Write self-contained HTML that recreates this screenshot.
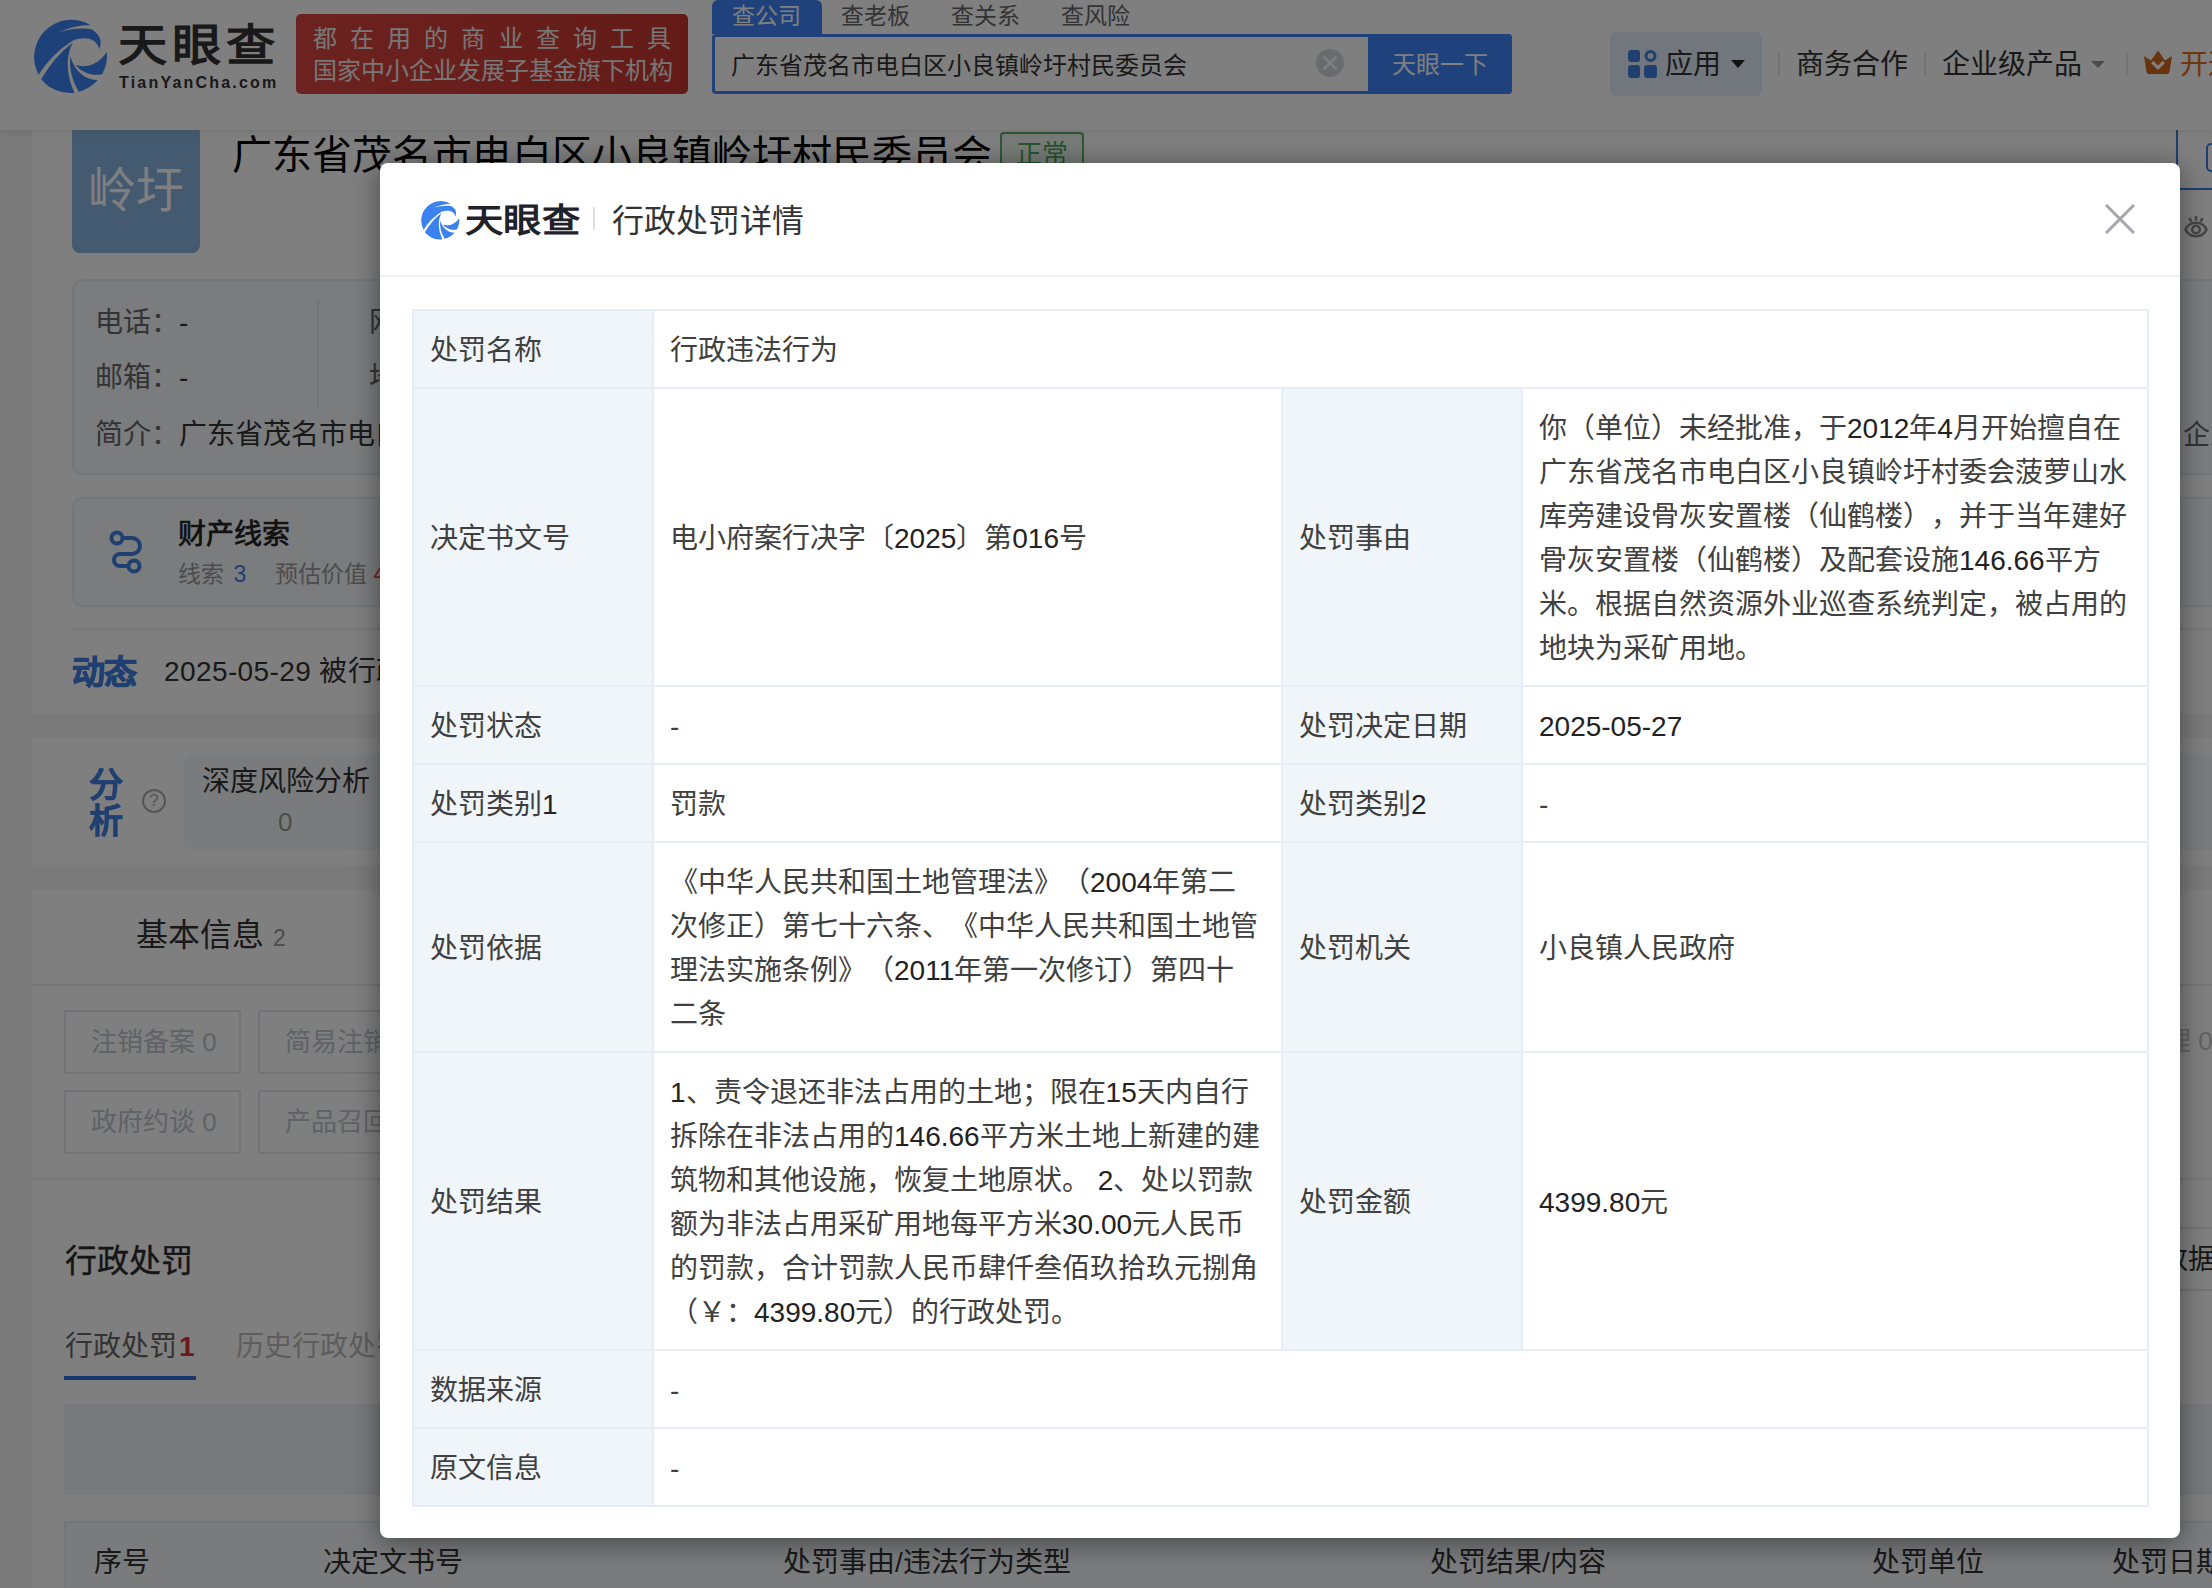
<!DOCTYPE html>
<html lang="zh-CN"><head><meta charset="utf-8">
<style>
*{box-sizing:border-box;margin:0;padding:0}
html,body{width:2212px;height:1588px;overflow:hidden}
body{font-family:"Liberation Sans",sans-serif;text-spacing-trim:space-all;background:#f4f4f4;position:relative;color:#333}
.a{position:absolute;white-space:nowrap}
#hdr{position:absolute;left:0;top:0;width:2212px;height:130px;background:#fff;box-shadow:0 2px 8px rgba(0,0,0,0.10);z-index:2}
.card{position:absolute;background:#fff}
#mask{position:absolute;left:0;top:0;width:2212px;height:1588px;background:rgba(0,0,0,0.5);z-index:10}
#modal{position:absolute;left:380px;top:163px;width:1800px;height:1375px;background:#fff;border-radius:8px;z-index:11;box-shadow:0 4px 28px rgba(0,0,0,0.45)}
.lbl{color:#333}
table.t{position:absolute;left:32px;top:146px;border-collapse:collapse;table-layout:fixed;width:1735px}
table.t td{border:2px solid #e6edf6;font-size:28px;line-height:44px;padding:18px 16px 14px 16px;vertical-align:middle;white-space:nowrap;color:#404040}
table.t td.l{background:#f0f5fa}
table.t i{font-style:normal;color:#222}
</style></head><body>

<!-- ============ PAGE ============ -->
<!-- company card -->
<div class="card" style="left:32px;top:100px;width:2400px;height:614px">
  <div class="a" style="left:40px;top:25px;width:128px;height:128px;background:#87b5e0;border-radius:8px;color:#fff;font-size:48px;line-height:132px;text-align:center">岭圩</div>
  <div class="a" style="left:200px;top:31px;font-size:40px;line-height:48px;color:#000">广东省茂名市电白区小良镇岭圩村民委员会</div>
  <div class="a" style="left:968px;top:32px;width:84px;height:44px;border:2px solid #5fae6d;background:#eef8f0;border-radius:4px;color:#4aaa5a;font-size:26px;line-height:40px;text-align:center">正常</div>
  <!-- info box -->
  <div class="a" style="left:40px;top:179px;width:2400px;height:196px;background:#f5f8fd;border:2px solid #e6edf7;border-radius:10px"></div>
  <div class="a" style="left:285px;top:200px;width:2px;height:111px;background:#e6eaf0"></div>
  <div class="a" style="left:63px;top:206px;font-size:28px;line-height:34px;color:#666">电话：<span style="color:#333">-</span></div>
  <div class="a" style="left:63px;top:261px;font-size:28px;line-height:34px;color:#666">邮箱：<span style="color:#333">-</span></div>
  <div class="a" style="left:63px;top:318px;font-size:28px;line-height:34px;color:#666">简介：<span style="color:#333">广东省茂名市电白区小良镇岭圩村民委员会</span></div>
  <div class="a" style="left:337px;top:206px;font-size:28px;line-height:34px;color:#666">网址：</div>
  <div class="a" style="left:337px;top:261px;font-size:28px;line-height:34px;color:#666">地址：</div>
  <!-- property box -->
  <div class="a" style="left:40px;top:397px;width:2400px;height:110px;background:#f5f8fd;border:2px solid #e6edf7;border-radius:10px"></div>
  <svg class="a" style="left:76px;top:430px" width="36" height="44" viewBox="0 0 36 44"><g fill="none" stroke="#3d7fe0" stroke-width="4"><circle cx="9" cy="8" r="5.5"/><circle cx="26" cy="36" r="5.5"/><path d="M14.5 8 H24 a8 8 0 0 1 0 16 H12 a6 6 0 0 0 0 12 H20.5"/></g></svg>
  <div class="a" style="left:146px;top:417px;font-size:28px;line-height:36px;color:#222;-webkit-text-stroke:0.7px #222">财产线索</div>
  <div class="a" style="left:146px;top:458px;font-size:23px;line-height:32px;color:#999">线索 <span style="color:#3d7fe0;margin-left:3px">3</span><span style="display:inline-block;width:29px"></span>预估价值 <span style="color:#e44">4</span></div>
  <!-- divider -->
  <div class="a" style="left:40px;top:528px;width:2400px;height:2px;background:#eceef2"></div>
  <div class="a" style="left:40px;top:553px;font-size:33px;line-height:40px;color:#3d7fe0;font-weight:bold;letter-spacing:-1px;-webkit-text-stroke:1px #3d7fe0">动态</div>
  <div class="a" style="left:132px;top:554px;font-size:28px;line-height:36px;color:#333;letter-spacing:0.4px">2025-05-29 被行政处罚</div>
</div>

<!-- analysis card -->
<div class="card" style="left:32px;top:738px;width:2400px;height:127px">
  <div class="a" style="left:57px;top:29px;font-size:34px;line-height:36px;color:#3d7fe0;font-weight:bold;-webkit-text-stroke:0.5px #3d7fe0;white-space:normal;width:36px">分析</div>
  <div class="a" style="left:110px;top:51px;width:24px;height:24px;border:2px solid #aaa;border-radius:50%;font-size:17px;line-height:20px;text-align:center;color:#aaa">?</div>
  <div class="a" style="left:152px;top:17px;width:2400px;height:95px;background:#f5f7fa;border-radius:8px"></div>
  <div class="a" style="left:170px;top:28px;font-size:28px;line-height:32px;color:#333">深度风险分析</div>
  <div class="a" style="left:246px;top:68px;font-size:26px;line-height:32px;color:#999">0</div>
</div>

<!-- basic info card -->
<div class="card" style="left:32px;top:889px;width:2400px;height:900px">
  <div class="a" style="left:104px;top:26px;font-size:32px;line-height:40px;color:#333">基本信息 <span style="font-size:23px;color:#999">2</span></div>
  <div class="a" style="left:0;top:95px;width:2400px;height:2px;background:#eceef2"></div>
  <div class="a" style="left:32px;top:121px;width:177px;height:64px;border:2px solid #e6e9ef;border-radius:2px;font-size:26px;line-height:60px;color:#bfc4cc;padding-left:25px">注销备案 0</div>
  <div class="a" style="left:226px;top:121px;width:177px;height:64px;border:2px solid #e6e9ef;border-radius:2px;font-size:26px;line-height:60px;color:#bfc4cc;padding-left:25px">简易注销 0</div>
  <div class="a" style="left:32px;top:201px;width:177px;height:64px;border:2px solid #e6e9ef;border-radius:2px;font-size:26px;line-height:60px;color:#bfc4cc;padding-left:25px">政府约谈 0</div>
  <div class="a" style="left:226px;top:201px;width:177px;height:64px;border:2px solid #e6e9ef;border-radius:2px;font-size:26px;line-height:60px;color:#bfc4cc;padding-left:25px">产品召回 0</div>
  <div class="a" style="left:0;top:289px;width:2400px;height:2px;background:#eceef2"></div>
  <div class="a" style="left:33px;top:352px;font-size:32px;line-height:40px;color:#2a2a2a;-webkit-text-stroke:0.4px #2a2a2a">行政处罚</div>
  <div class="a" style="left:33px;top:440px;font-size:28px;line-height:36px;color:#666">行政处罚<b style="color:#d33;margin-left:2px">1</b></div>
  <div class="a" style="left:204px;top:440px;font-size:28px;line-height:36px;color:#bbb">历史行政处罚</div>
  <div class="a" style="left:32px;top:487px;width:132px;height:4px;background:#2f6cd6"></div>
  <div class="a" style="left:32px;top:515px;width:2400px;height:91px;background:#f0f3f8"></div>
  <div class="a" style="left:32px;top:632px;width:2400px;height:200px;background:#f5f7fa;border:2px solid #e8ebf0"></div>
  <div class="a" style="left:62px;top:657px;font-size:28px;line-height:34px;color:#333">序号</div>
  <div class="a" style="left:291px;top:657px;font-size:28px;line-height:34px;color:#333">决定文书号</div>
  <div class="a" style="left:751px;top:657px;font-size:28px;line-height:34px;color:#333">处罚事由/违法行为类型</div>
  <div class="a" style="left:1398px;top:657px;font-size:28px;line-height:34px;color:#333">处罚结果/内容</div>
  <div class="a" style="left:1840px;top:657px;font-size:28px;line-height:34px;color:#333">处罚单位</div>
  <div class="a" style="left:2080px;top:657px;font-size:28px;line-height:34px;color:#333">处罚日期</div>
</div>

<!-- ============ HEADER ============ -->
<div id="hdr">
  <svg class="a" style="left:28px;top:14px" width="84" height="84" viewBox="0 0 1588 1588">
    <g fill="#3b82f0">
      <path d="M200 1150 Q450 750 850 500 C1050 420 1300 440 1345 665 C1410 520 1370 400 1200 290 C1000 255 800 290 555 350 C800 250 1000 200 1190 215 A705 705 0 0 0 200 1150 Z"/>
      <path d="M250 1235 Q500 800 850 540 C730 750 700 1100 880 1490 A705 705 0 0 1 250 1235 Z"/>
      <path d="M800 800 C780 1050 830 1250 960 1470 A705 705 0 0 0 1320 1250 C1100 1250 880 1100 800 800 Z"/>
      <path d="M900 960 C1050 1020 1300 1000 1490 720 A705 705 0 0 1 1400 1140 C1200 1180 1000 1100 900 960 Z"/>
    </g>
  </svg>
  <div class="a" style="left:118px;top:20px;font-size:44px;line-height:52px;font-weight:bold;color:#333;letter-spacing:4px;transform:scaleX(1.12);transform-origin:0 0">天眼查</div>
  <div class="a" style="left:119px;top:73px;font-size:16px;line-height:20px;font-weight:bold;color:#333;letter-spacing:2.2px">TianYanCha.com</div>
  <div class="a" style="left:296px;top:14px;width:392px;height:80px;border-radius:5px;background:linear-gradient(90deg,#d9463f,#c83730)"></div>
  <div class="a" style="left:313px;top:24px;width:358px;font-size:24px;line-height:30px;color:#eeeeee;text-align:justify;text-align-last:justify">都在用的商业查询工具</div>
  <div class="a" style="left:313px;top:56px;font-size:24px;line-height:30px;color:#eeeeee">国家中小企业发展子基金旗下机构</div>
  <!-- tabs -->
  <div class="a" style="left:712px;top:0;width:110px;height:34px;background:#3f85f8;border-radius:6px 6px 0 0"></div>
  <div class="a" style="left:732px;top:0;font-size:23px;line-height:32px;color:#fff">查公司</div>
  <div class="a" style="left:841px;top:0;font-size:23px;line-height:32px;color:#666">查老板</div>
  <div class="a" style="left:951px;top:0;font-size:23px;line-height:32px;color:#666">查关系</div>
  <div class="a" style="left:1061px;top:0;font-size:23px;line-height:32px;color:#666">查风险</div>
  <!-- search -->
  <div class="a" style="left:712px;top:34px;width:800px;height:60px;border:3px solid #3f85f8;border-radius:4px;background:#fff"></div>
  <div class="a" style="left:731px;top:49px;font-size:24px;line-height:34px;color:#333">广东省茂名市电白区小良镇岭圩村民委员会</div>
  <div class="a" style="left:1316px;top:49px;width:28px;height:28px;border-radius:50%;background:#d3d6de"></div>
  <svg class="a" style="left:1316px;top:49px" width="28" height="28" viewBox="0 0 28 28"><path d="M8.3 8.3 L19.7 19.7 M19.7 8.3 L8.3 19.7" stroke="#fff" stroke-width="2.6" stroke-linecap="round"/></svg>
  <div class="a" style="left:1368px;top:34px;width:144px;height:60px;background:#3f85f8;border-radius:0 4px 4px 0"></div>
  <div class="a" style="left:1392px;top:48px;font-size:24px;line-height:34px;color:#fff">天眼一下</div>
  <!-- right nav -->
  <div class="a" style="left:1610px;top:32px;width:152px;height:64px;background:#e4edfb;border-radius:6px"></div>
  <svg class="a" style="left:1628px;top:50px" width="29" height="28" viewBox="0 0 29 28"><g fill="#3d7fe0"><rect x="0" y="0" width="12" height="12" rx="3"/><rect x="0" y="15" width="12" height="13" rx="3"/><rect x="16" y="15" width="13" height="13" rx="3"/><circle cx="22.5" cy="6" r="4.5" fill="none" stroke="#3d7fe0" stroke-width="3"/></g></svg>
  <div class="a" style="left:1665px;top:47px;font-size:28px;line-height:36px;color:#333">应用</div>
  <svg class="a" style="left:1731px;top:60px" width="14" height="9" viewBox="0 0 14 9"><path d="M0 0 H14 L7 8 Z" fill="#222"/></svg>
  <div class="a" style="left:1778px;top:52px;width:2px;height:24px;background:#e5e5e5"></div>
  <div class="a" style="left:1796px;top:47px;font-size:28px;line-height:36px;color:#333">商务合作</div>
  <div class="a" style="left:1924px;top:52px;width:2px;height:24px;background:#e5e5e5"></div>
  <div class="a" style="left:1942px;top:47px;font-size:28px;line-height:36px;color:#333">企业级产品</div>
  <svg class="a" style="left:2091px;top:61px" width="14" height="8" viewBox="0 0 14 8"><path d="M0 0 H14 L7 7 Z" fill="#999"/></svg>
  <div class="a" style="left:2126px;top:52px;width:2px;height:24px;background:#e5e5e5"></div>
  <svg class="a" style="left:2144px;top:50px" width="28" height="25" viewBox="0 0 28 25"><path d="M0 6 L7 10.5 L14 0.5 L21 10.5 L28 6 L25.5 22 Q25 24 23 24 H5 Q3 24 2.5 22 Z" fill="#d2661f"/><path d="M8.2 12 L14 17.8 L19.8 12" fill="none" stroke="#fff" stroke-width="3.2"/></svg>
  <div class="a" style="left:2180px;top:47px;font-size:28px;line-height:36px;color:#dc6a1e">开通</div>
</div>


<!-- right strip -->
<div class="a" style="left:2176px;top:100px;width:100px;height:90px;border-left:2px solid #3d7fe0;border-bottom:2px solid #3d7fe0;z-index:1"></div>
<div class="a" style="left:2206px;top:143px;width:40px;height:29px;border:2px solid #3d7fe0;border-radius:5px;z-index:1"></div>
<svg class="a" style="left:2184px;top:215px;z-index:1" width="24" height="25" viewBox="0 0 24 25"><g fill="none" stroke="#8a8a8a" stroke-width="2.6"><path d="M1.5 14.5 C5.5 5.5 18.5 5.5 22.5 14.5 C18.5 23.5 5.5 23.5 1.5 14.5 Z"/><circle cx="12" cy="14.5" r="3.8"/><path d="M12 1 V5.5 M5.5 3 L7.3 6.8 M18.5 3 L16.7 6.8"/></g></svg>
<div class="a" style="left:2183px;top:418px;font-size:27px;line-height:34px;color:#666;z-index:1">企业</div>
<div class="a" style="left:2165px;top:1024px;font-size:26px;line-height:34px;color:#c4c4c4;z-index:1">理 0</div>
<div class="a" style="left:2150px;top:1227px;width:100px;height:64px;border:2px solid #e8e8e8;z-index:1"></div>
<div class="a" style="left:2160px;top:1243px;font-size:28px;line-height:34px;color:#333;z-index:1">数据</div>

<div id="mask"></div>

<!-- ============ MODAL ============ -->
<div id="modal">
  <svg class="a" style="left:38px;top:35px" width="44" height="44" viewBox="0 0 1588 1588">
    <g fill="#3b82f0">
      <path d="M200 1150 Q450 750 850 500 C1050 420 1300 440 1345 665 C1410 520 1370 400 1200 290 C1000 255 800 290 555 350 C800 250 1000 200 1190 215 A705 705 0 0 0 200 1150 Z"/>
      <path d="M250 1235 Q500 800 850 540 C730 750 700 1100 880 1490 A705 705 0 0 1 250 1235 Z"/>
      <path d="M800 800 C780 1050 830 1250 960 1470 A705 705 0 0 0 1320 1250 C1100 1250 880 1100 800 800 Z"/>
      <path d="M900 960 C1050 1020 1300 1000 1490 720 A705 705 0 0 1 1400 1140 C1200 1180 1000 1100 900 960 Z"/>
    </g>
  </svg>
  <div class="a" style="left:85px;top:36px;font-size:33px;line-height:44px;font-weight:bold;color:#1f2329;transform:scaleX(1.16);transform-origin:0 0">天眼查</div>
  <div class="a" style="left:213px;top:44px;width:2px;height:23px;background:#dde1e6"></div>
  <div class="a" style="left:232px;top:38px;font-size:32px;line-height:40px;color:#333">行政处罚详情</div>
  <svg class="a" style="left:1725px;top:41px" width="30" height="30" viewBox="0 0 30 30"><path d="M1 1 L29 29 M29 1 L1 29" stroke="#a3a6ad" stroke-width="3"/></svg>
  <div class="a" style="left:0;top:112px;width:1800px;height:2px;background:#eef1f5"></div>

  <table class="t">
    <colgroup><col style="width:240px"><col style="width:629px"><col style="width:240px"><col style="width:626px"></colgroup>
    <tr><td class="l">处罚名称</td><td colspan="3">行政违法行为</td></tr>
    <tr><td class="l">决定书文号</td><td>电小府案行决字〔<i>2025</i>〕第<i>016</i>号</td><td class="l">处罚事由</td><td>你（单位）未经批准，于<i>2012</i>年<i>4</i>月开始擅自在<br>广东省茂名市电白区小良镇岭圩村委会菠萝山水<br>库旁建设骨灰安置楼（仙鹤楼），并于当年建好<br>骨灰安置楼（仙鹤楼）及配套设施<i>146.66</i>平方<br>米。根据自然资源外业巡查系统判定，被占用的<br>地块为采矿用地。</td></tr>
    <tr><td class="l">处罚状态</td><td>-</td><td class="l">处罚决定日期</td><td><i>2025-05-27</i></td></tr>
    <tr><td class="l">处罚类别<i>1</i></td><td>罚款</td><td class="l">处罚类别<i>2</i></td><td>-</td></tr>
    <tr><td class="l">处罚依据</td><td>《中华人民共和国土地管理法》（<i>2004</i>年第二<br>次修正）第七十六条、《中华人民共和国土地管<br>理法实施条例》（<i>2011</i>年第一次修订）第四十<br>二条</td><td class="l">处罚机关</td><td>小良镇人民政府</td></tr>
    <tr><td class="l">处罚结果</td><td><i>1</i>、责令退还非法占用的土地；限在<i>15</i>天内自行<br>拆除在非法占用的<i>146.66</i>平方米土地上新建的建<br>筑物和其他设施，恢复土地原状。 <i>2</i>、处以罚款<br>额为非法占用采矿用地每平方米<i>30.00</i>元人民币<br>的罚款，合计罚款人民币肆仟叁佰玖拾玖元捌角<br>（￥：<i>4399.80</i>元）的行政处罚。</td><td class="l">处罚金额</td><td><i>4399.80</i>元</td></tr>
    <tr><td class="l">数据来源</td><td colspan="3">-</td></tr>
    <tr><td class="l">原文信息</td><td colspan="3">-</td></tr>
  </table>
</div>

</body></html>
